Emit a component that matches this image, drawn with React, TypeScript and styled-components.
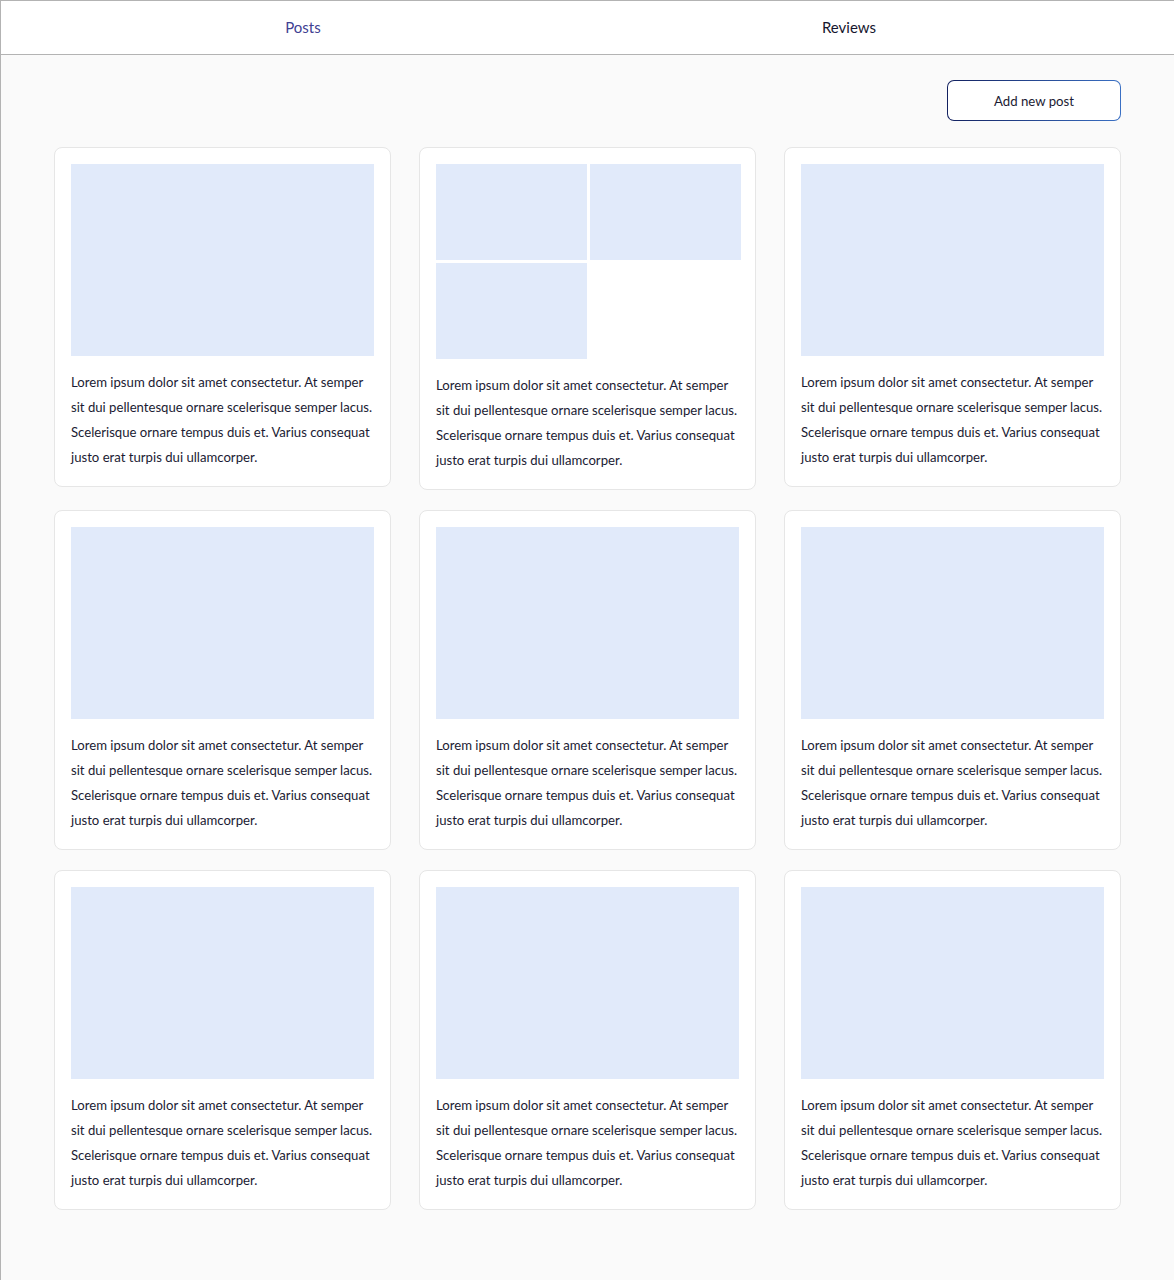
import React from "react";
import styled, { createGlobalStyle } from "styled-components";

const GlobalStyle = createGlobalStyle`
  html, body {
    margin: 0;
    padding: 0;
    background: #fafafa;
  }
  body {
    font-family: Lato, "Liberation Sans", sans-serif;
    color: #1b1b33;
  }
  * { box-sizing: border-box; }
`;

const Page = styled.div`
  min-height: 1280px;
  width: 1174px;
  border-left: 1px solid #b3b3b3;
  border-top: 1px solid #b3b3b3;
  background: #fafafa;
`;

const Header = styled.nav`
  height: 54px;
  background: #ffffff;
  border-bottom: 1px solid #b3b3b3;
  display: flex;
  align-items: stretch;
  padding-left: 29px;
`;

const Tab = styled.button<{ $active?: boolean }>`
  width: 546px;
  border: none;
  background: transparent;
  font-family: inherit;
  font-size: 15px;
  color: ${(p) => (p.$active ? "#3f4193" : "#16162e")};
  cursor: pointer;
  padding: 0 0 2px 0;
`;

const Main = styled.main`
  padding: 25px 53px 60px 53px;
  display: flex;
  flex-direction: column;
`;

const Toolbar = styled.div`
  display: flex;
  justify-content: flex-end;
  margin-bottom: 26px;
`;

const AddButton = styled.button`
  width: 174px;
  height: 41px;
  border: 1.5px solid transparent;
  border-radius: 7px;
  background: linear-gradient(#ffffff, #ffffff) padding-box,
    linear-gradient(to right, #12205f, #3a70c4) border-box;
  font-family: inherit;
  font-size: 13.2px;
  color: #1b1b33;
  cursor: pointer;
`;

const Grid = styled.div`
  display: grid;
  grid-template-columns: repeat(3, 337px);
  column-gap: 28px;
  row-gap: 20px;
  align-items: start;
`;

const Card = styled.article`
  background: #ffffff;
  border: 1px solid #e6e6e6;
  border-radius: 8px;
  padding: 16px;
  display: flex;
  flex-direction: column;
  gap: 14px;
`;

const ImagePlaceholder = styled.div`
  height: 192px;
  background: #e1eafa;
`;

const Gallery = styled.div`
  display: grid;
  grid-template-columns: 151px 151px;
  grid-auto-rows: 96px;
  gap: 3px;
`;

const GalleryItem = styled.div`
  background: #e1eafa;
`;

const Text = styled.p`
  margin: 0;
  font-size: 13.15px;
  line-height: 25px;
  color: #1b1b33;
`;

const Line = styled.span`
  display: block;
  white-space: nowrap;
`;

const lines = [
  "Lorem ipsum dolor sit amet consectetur. At semper",
  "sit dui pellentesque ornare scelerisque semper lacus.",
  "Scelerisque ornare tempus duis et. Varius consequat",
  "justo erat turpis dui ullamcorper.",
];

const PostText = () => (
  <Text>
    {lines.map((l) => (
      <Line key={l}>{l}</Line>
    ))}
  </Text>
);

export default function App() {
  const posts = Array.from({ length: 9 }, (_, i) => i);
  return (
    <>
      <GlobalStyle />
      <Page>
        <Header>
          <Tab $active>Posts</Tab>
          <Tab>Reviews</Tab>
        </Header>
        <Main>
          <Toolbar>
            <AddButton>Add new post</AddButton>
          </Toolbar>
          <Grid>
            {posts.map((i) => (
              <Card key={i}>
                {i === 1 ? (
                  <Gallery>
                    <GalleryItem />
                    <GalleryItem />
                    <GalleryItem />
                  </Gallery>
                ) : (
                  <ImagePlaceholder />
                )}
                <PostText />
              </Card>
            ))}
          </Grid>
        </Main>
      </Page>
    </>
  );
}
